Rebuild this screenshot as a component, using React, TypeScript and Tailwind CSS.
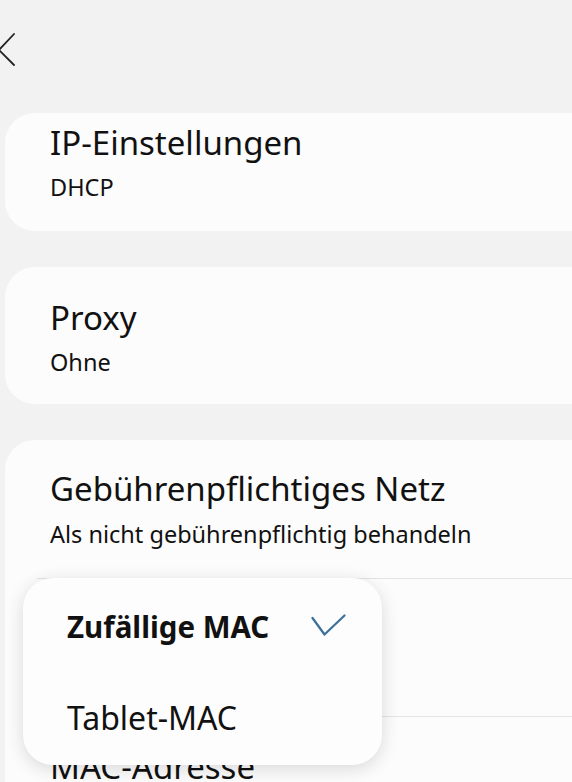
interface CardProps {
  title: string;
  subtitle: string;
  className: string;
}

function SettingCard({ title, subtitle, className }: CardProps) {
  return (
    <div className={`bg-[#fcfcfc] rounded-[30px] pl-[45px] ${className}`}>
      <div className="text-[33px] leading-[40px] text-[#111]">{title}</div>
      <div className="mt-[10px] text-[23.5px] leading-[28px] text-[#111]">{subtitle}</div>
    </div>
  );
}

export default function App() {
  return (
    <div
      className="relative w-[572px] h-[782px] overflow-hidden bg-[#f2f2f2]"
      style={{ fontFamily: '"Noto Sans", "Open Sans", sans-serif' }}
    >
      {/* header with back chevron */}
      <div className="h-[113px] pt-[32px]">
        <svg className="-ml-[2px]" width="18" height="36" viewBox="0 0 18 36" fill="none">
          <path d="M16 2 L1 18 L16 33" stroke="#222" strokeWidth="1.8" strokeLinecap="round" strokeLinejoin="round" />
        </svg>
      </div>

      <div className="w-[640px] pl-[5px] flex flex-col gap-[36px]">
        <SettingCard title="IP-Einstellungen" subtitle="DHCP" className="pt-[10px] pb-[30px]" />
        <SettingCard title="Proxy" subtitle="Ohne" className="pt-[31px] pb-[28px]" />

        <div className="bg-[#fcfcfc] rounded-[30px]">
          <div className="pl-[45px] pt-[29px] pb-[30px]">
            <div className="text-[33px] leading-[40px] text-[#111]">Gebührenpflichtiges Netz</div>
            <div className="mt-[11px] text-[23.5px] leading-[28px] text-[#111]">Als nicht gebührenpflichtig behandeln</div>
          </div>
          <div className="ml-[32px] h-px bg-[#e4e4e4]" />
          <div className="pl-[45px] pt-[31px] h-[137px]">
            <div className="text-[33px] leading-[40px] text-[#111]">MAC-Adresstyp</div>
            <div className="mt-[10px] text-[23.5px] leading-[28px] text-[#111]">Zufällige MAC</div>
          </div>
          <div className="ml-[32px] h-px bg-[#e4e4e4]" />
          <div className="pl-[45px] pt-[30px] pb-[30px]">
            <div className="text-[33px] leading-[40px] text-[#111]">MAC-Adresse</div>
            <div className="mt-[10px] text-[23.5px] leading-[28px] text-[#111]">00:00:00:00:00:00</div>
          </div>
        </div>
      </div>

      {/* dropdown menu over the list */}
      <div className="absolute left-[23px] top-[578px] w-[359px] h-[187px] rounded-[30px] bg-[#fdfdfd] shadow-[0_4px_18px_rgba(0,0,0,0.14)] pl-[44px] pr-[36px]">
        <div className="flex items-center justify-between h-[98px]">
          <span className="text-[29.5px] leading-[40px] font-bold text-[#111]">Zufällige MAC</span>
          <svg width="35" height="23" viewBox="0 0 35 23" fill="none" className="mt-[-4px]">
            <path d="M1.5 4 L13.5 20.5 L33.5 1.5" stroke="#3a7099" strokeWidth="2.2" strokeLinecap="round" strokeLinejoin="round" />
          </svg>
        </div>
        <div className="text-[32px] leading-[40px] text-[#111] pt-[22px]">Tablet-MAC</div>
      </div>
    </div>
  );
}
